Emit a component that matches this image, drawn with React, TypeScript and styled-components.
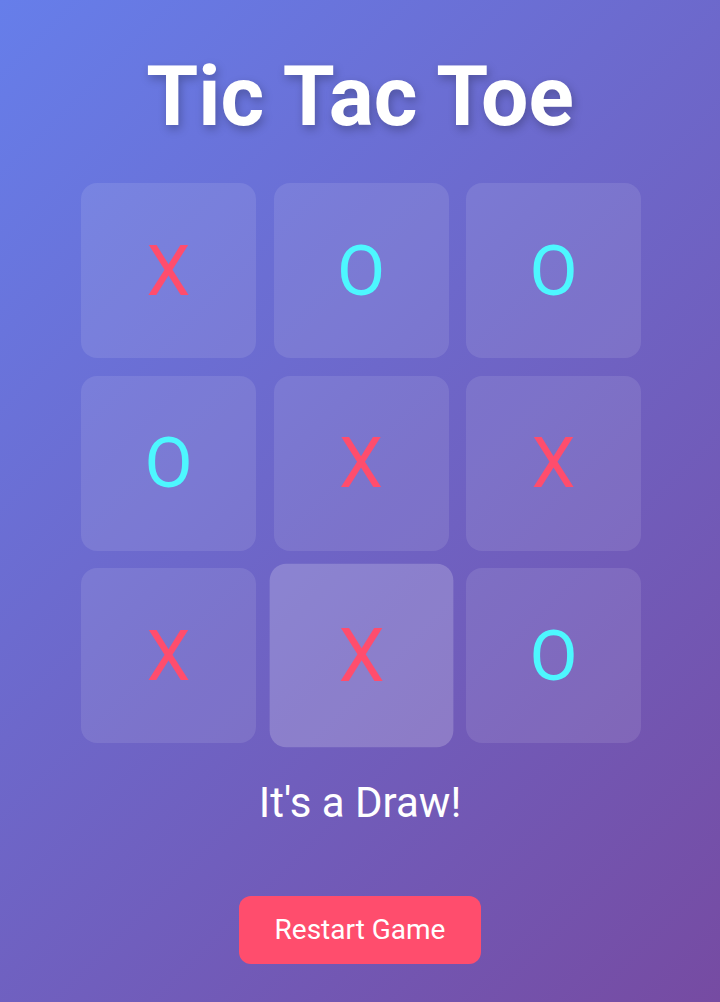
import styled, { createGlobalStyle } from 'styled-components';

const GlobalStyle = createGlobalStyle`
    html, body {
        margin: 0;
        padding: 0;
    }
    body {
        font-family: Roboto, "Liberation Sans", sans-serif;
        background: linear-gradient(135deg, #667eea 0%, #764ba2 100%);
        min-height: 100vh;
        color: #fff;
    }
`;

const Container = styled.div`
    display: flex;
    flex-direction: column;
    align-items: center;
    padding-top: 47px;
    min-height: 100vh;
    box-sizing: border-box;
`;

const Title = styled.h1`
    margin: 0 0 37px;
    font-size: 84px;
    font-weight: 700;
    line-height: normal;
    text-shadow: 2px 4px 10px rgba(0, 0, 0, 0.25);
`;

const Board = styled.div`
    display: grid;
    grid-template-columns: repeat(3, 175px);
    grid-template-rows: repeat(3, 175px);
    gap: 17.5px;
    margin-left: 2px;
`;

const Cell = styled.div<{ $mark: string; $hover?: boolean }>`
    display: flex;
    align-items: center;
    justify-content: center;
    border-radius: 16px;
    background: ${(props) => (props.$hover ? 'rgba(255, 255, 255, 0.2)' : 'rgba(255, 255, 255, 0.1)')};
    transform: ${(props) => (props.$hover ? 'scale(1.05)' : 'none')};
    font-size: 70px;
    color: ${(props) => (props.$mark === 'X' ? '#ff4d6d' : '#4df7ff')};
    cursor: pointer;
`;

const Status = styled.p`
    margin: 35px 0 0;
    font-size: 42px;
    line-height: normal;
`;

const RestartButton = styled.button`
    margin-top: 69px;
    padding: 18px 36px;
    font-family: inherit;
    font-size: 28px;
    line-height: 32px;
    color: #fff;
    background: #ff4d6d;
    border: none;
    border-radius: 12px;
    cursor: pointer;
`;

const board = ['X', 'O', 'O', 'O', 'X', 'X', 'X', 'X', 'O'];

function App() {
    return (
        <>
            <GlobalStyle />
            <Container>
                <Title>Tic Tac Toe</Title>
                <Board>
                    {board.map((mark, i) => (
                        <Cell key={i} $mark={mark} $hover={i === 7}>
                            {mark}
                        </Cell>
                    ))}
                </Board>
                <Status>It's a Draw!</Status>
                <RestartButton>Restart Game</RestartButton>
            </Container>
        </>
    );
}

export default App;
